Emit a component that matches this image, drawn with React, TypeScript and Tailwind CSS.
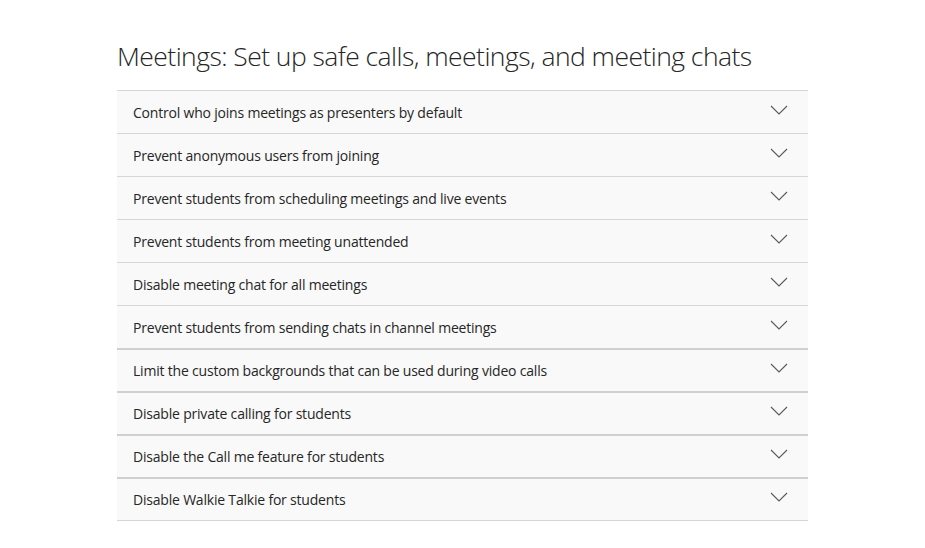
const ITEMS = [
  "Control who joins meetings as presenters by default",
  "Prevent anonymous users from joining",
  "Prevent students from scheduling meetings and live events",
  "Prevent students from meeting unattended",
  "Disable meeting chat for all meetings",
  "Prevent students from sending chats in channel meetings",
  "Limit the custom backgrounds that can be used during video calls",
  "Disable private calling for students",
  "Disable the Call me feature for students",
  "Disable Walkie Talkie for students",
];

function Chevron() {
  return (
    <svg width="18" height="10" viewBox="0 0 18 10" fill="none" className="mb-[5px] shrink-0">
      <path d="M1 1 L9 9 L17 1" stroke="#5a5a5a" strokeWidth="1.1" />
    </svg>
  );
}

export default function App() {
  return (
    <div className="min-h-[548px] bg-white font-['Open_Sans',sans-serif] text-[#262626]">
      <div className="ml-[117px] w-[691px] pt-[36px]">
        <h1 className="mb-[14px] h-[40px] whitespace-nowrap text-[26.5px] font-light leading-[40px] tracking-[-0.55px] text-[#262626]">
          Meetings: Set up safe calls, meetings, and meeting chats
        </h1>
        <ul className="border-b border-[#d6d6d6]">
          {ITEMS.map((item, i) => (
            <li
              key={item}
              className={
                "flex h-[43px] items-center justify-between bg-[#f9f9f9] pl-[16px] pr-[20px] " +
                (i >= 6 ? "border-t-2 border-[#d0d0d0]" : "border-t border-[#d6d6d6]")
              }
            >
              <span className="text-[14px] tracking-[-0.2px]">{item}</span>
              <Chevron />
            </li>
          ))}
        </ul>
      </div>
    </div>
  );
}
